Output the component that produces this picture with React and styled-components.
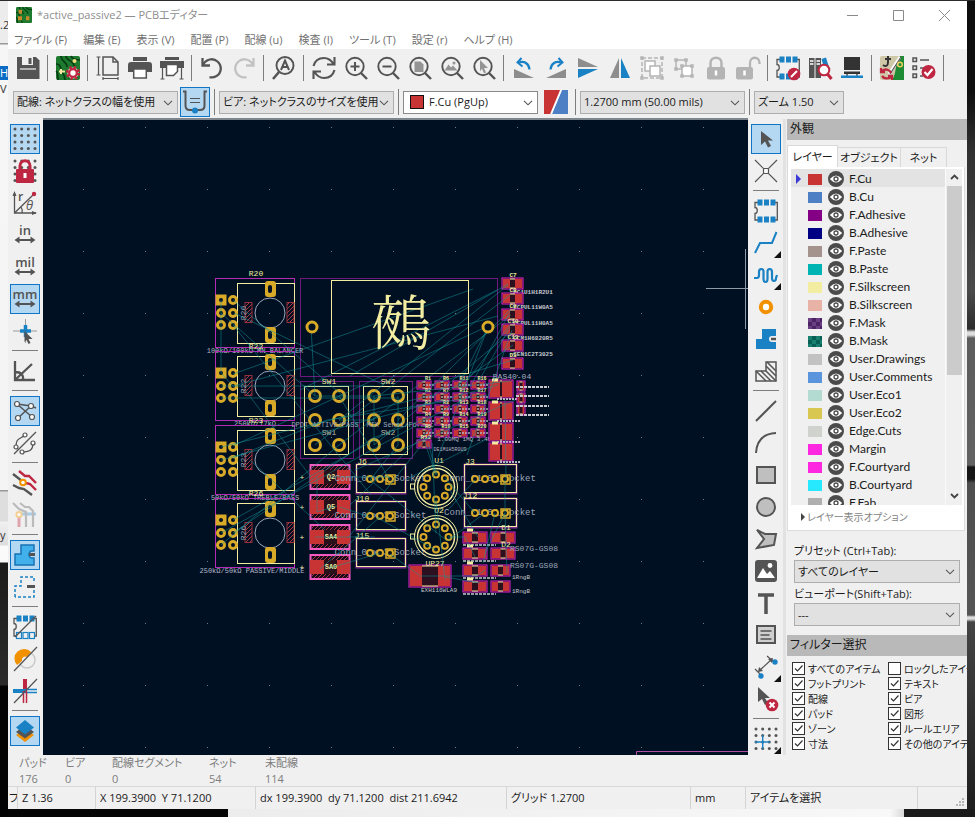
import React from "react";
import styled, { createGlobalStyle } from "styled-components";

const INK = "#545454";
const BLUE = "#1a81c4";
const RED = "#bf2641";
const ORANGE = "#f29100";
const PALE = "#b4b4b4";

const GlobalStyle = createGlobalStyle`
  *, *::before, *::after { box-sizing: border-box; }
  body {
    margin: 0;
    background: #080808;
  }
  body, button, select, input {
    font-family: "Open Sans", "Noto Sans CJK JP", sans-serif;
    font-feature-settings: "palt";
    font-size: 11px;
    line-height: 16px;
    color: #1b1b1b;
  }
`;

/* ---------- desktop and window frame ---------- */

const Desktop = styled.div`
  min-height: 100vh;
  display: grid;
  grid-template-columns: 8px minmax(0, 1fr) 8px;
  grid-template-rows: 1fr 8px;
  padding-top: 1px;
  background: #2b2b2b;
  overflow: hidden;
`;

const LeftSliver = styled.div`
  grid-row: 1 / 3;
  overflow: hidden;
  display: flex;
  flex-direction: column;
  background: linear-gradient(
    #ececec 42px, #999 42px, #999 43px, #f6f6f6 44px, #f4f4f4 489px,
    #999 489px, #999 490px, #dedede 491px, #dedede 520px, #f0f0f0 521px,
    #ddd 544px, #fafafa 545px, #fafafa 561px, #1b1b1b 562px, #2b2b2b 684px,
    #030303 685px
  );
`;

const SliverText = styled.span`
  height: 14px;
  margin-top: ${(p) => p.$gap}px;
  line-height: 14px;
  color: ${(p) => (p.$on ? "#fff" : "#333")};
  background: ${(p) => (p.$on ? "#0a6cc4" : "transparent")};
`;

const RightSliver = styled.div`
  background: linear-gradient(
    #0e0e0e 90px, #303030 150px, #4a4a4a 290px, #2c2c2c 328px, #ddd 331px,
    #ddd 334px, #5c5c5c 337px, #626262 464px, #151515 466px, #151515 478px,
    #4e4e4e 482px, #555 614px, #ddd 616px, #ddd 618px, #444 621px, #202020 800px
  );
`;

const BottomSliver = styled.div`
  grid-column: 2 / 4;
  background: linear-gradient(
    90deg,
    #050505 220px, #ececec 220px, #f8f8f8 882px, #dadada 896px, #1b1b1b 896px
  );
`;

const Window = styled.main`
  min-width: 0;
  display: flex;
  flex-direction: column;
  background: #f0f0f0;
`;

const TitleBar = styled.header`
  display: flex;
  align-items: center;
  height: 28px;
  padding-left: 8px;
  background: #fff;
  color: #8e8e8e;
`;

const Title = styled.h1`
  flex: 1;
  margin: 0 0 0 5px;
  font-size: 11px;
  line-height: 18px;
  font-weight: 400;
`;

const CaptionButton = styled.button`
  width: 46px;
  height: 28px;
  display: grid;
  place-items: center;
  padding: 0;
  border: 0;
  background: none;
`;

const MenuBar = styled.nav`
  display: flex;
  gap: 16px;
  height: 20px;
  padding-left: 6px;
  background: #fff;
`;

const MenuItem = styled.button`
  padding: 0;
  border: 0;
  background: none;
  line-height: 22px;
  white-space: nowrap;
  color: #707070;
`;

/* ---------- toolbars ---------- */

const Toolbar = styled.div`
  display: flex;
  align-items: center;
  height: 37px;
  padding-left: 4px;
`;

const OptionBar = styled.div`
  display: flex;
  align-items: center;
  height: 32px;
  padding-left: 5px;
`;

const SideBar = styled.div`
  display: flex;
  flex-direction: column;
  align-items: flex-start;
  width: 35px;
  flex: none;
  padding-top: 5px;
  padding-left: ${(p) => p.$inset}px;
`;

const ToolButton = styled.button`
  position: relative;
  flex: none;
  width: 30px;
  height: 30px;
  margin: 1px;
  display: grid;
  place-items: center;
  padding: 0;
  border: 1px solid ${(p) => (p.$on ? "#0f75c6" : "transparent")};
  background: ${(p) => (p.$on ? "#b4d7f2" : "transparent")};

  svg {
    display: block;
    overflow: visible;
  }
`;

const FlyoutMark = styled.i`
  position: absolute;
  right: -1px;
  bottom: -1px;
  border-left: 7px solid transparent;
  border-bottom: 7px solid #111;
`;

const Divider = styled.span`
  flex: none;
  width: ${(p) => (p.$across ? 26 : 1)}px;
  height: ${(p) => (p.$across ? 1 : 26)}px;
  margin: ${(p) => (p.$across ? "3px 3px 4px" : "0 4px 0 3px")};
  background: #7d7d7d;
`;

const SelectBox = styled.span`
  position: relative;
  flex: none;
  display: flex;
  align-items: center;
  width: ${(p) => p.$w};
  height: 23px;
  margin-right: ${(p) => p.$gap || 0}px;
  border: 1px solid ${(p) => (p.$light ? "#8a8a8a" : "#adadad")};
  background: ${(p) => (p.$light ? "#fff" : "#e1e1e1")};

  select {
    flex: 1;
    min-width: 0;
    height: 21px;
    padding: 0 14px 0 ${(p) => (p.$light ? 5 : 3)}px;
    border: 0;
    appearance: none;
    background: transparent;
    line-height: 20px;
  }

  svg {
    position: absolute;
    right: 4px;
    top: 8px;
    pointer-events: none;
  }
`;

const ColorChip = styled.i`
  flex: none;
  width: 14px;
  height: 14px;
  margin-left: 6px;
  border: 1px solid #111;
  background: #c83434;
`;

const Body = styled.div`
  flex: 1;
  display: flex;
`;

const Board = styled.section`
  flex: 1;
  min-width: 0;
  display: flex;
  border-top: 2px solid #7e858c;
  background: #001023;

  svg {
    display: block;
    width: 100%;
    height: 100%;
  }
`;

/* ---------- appearance panel ---------- */

const Side = styled.aside`
  flex: none;
  display: flex;
  flex-direction: column;
  width: 184px;
  margin-top: 1px;
  padding-left: 4px;
  box-shadow: inset 3px 0 #e2e2e2;
  overflow: hidden;
`;

const PanelTitle = styled.h2`
  flex: none;
  margin: 0;
  height: 21px;
  padding-left: 3px;
  font-size: 12px;
  font-weight: 400;
  line-height: 20px;
  background: #b9b9b9;
`;

const Tabs = styled.div`
  display: flex;
  align-items: flex-end;
  height: 27px;
  flex: none;
`;

const Tab = styled.button`
  height: ${(p) => (p.$on ? 22 : 20)}px;
  width: ${(p) => p.$w}px;
  padding: 0;
  border: 1px solid #d9d9d9;
  border-bottom: 0;
  border-left-width: ${(p) => (p.$on ? 1 : 0)}px;
  background: ${(p) => (p.$on ? "#fff" : "#f0f0f0")};
  white-space: nowrap;
`;

const TabPage = styled.div`
  flex: none;
  display: flex;
  flex-direction: column;
  height: 364px;
  margin-right: 2px;
  padding: 2px 2px 0 3px;
  border: 1px solid #dcdcdc;
  border-top: 0;
  background: #fff;
`;

const ListFrame = styled.div`
  display: flex;
  height: 336px;
  overflow: hidden;
  background: #f0f0f0;
`;

const LayerList = styled.ul`
  flex: 1;
  margin: 0;
  padding: 0;
  list-style: none;
`;

const LayerRow = styled.li`
  display: grid;
  grid-template-columns: 17px 20px 21px 1fr;
  align-items: center;
  height: 18px;
  padding-top: 2px;
  font-family: Lato, "Open Sans", sans-serif;
  font-size: 12px;
  background: ${(p) => (p.$on ? "#e3e3e3" : "transparent")};
`;

const RowMark = styled.i`
  margin-left: 5px;
  width: 0;
  border: 5px solid transparent;
  border-left-color: #3a3ad8;
  border-right: 0;
`;

const Swatch = styled.i`
  width: 14px;
  height: 11px;
  background: ${(p) =>
    p.$mask
      ? `repeating-conic-gradient(${p.$mask} 0 25%, ${p.$color} 0 50%) 0 0 / 8px 8px`
      : p.$color};
`;

const EyeButton = styled.button`
  padding: 0;
  border: 0;
  background: none;
  display: flex;
`;

const ScrollTrack = styled.div`
  width: 17px;
  display: flex;
  flex-direction: column;
  align-items: center;
  border-left: 1px solid #fafafa;

  svg {
    margin: 5px 0 6px;
  }
`;

const ScrollThumb = styled.div`
  width: 15px;
  height: 189px;
  margin-bottom: auto;
  background: #cbcbcb;
`;

const OptionsToggle = styled.button`
  display: flex;
  align-items: center;
  gap: 2px;
  padding: 4px 0 0 10px;
  border: 0;
  background: none;
  font-size: 10px;
  color: #848484;
`;

const Field = styled.div`
  display: flex;
  flex-direction: column;
  gap: 1px;
  padding: 0 7px;
  margin-top: ${(p) => p.$gap}px;
  line-height: 17px;
`;

const FilterPanel = styled.section`
  margin-top: 9px;
`;

const Filters = styled.div`
  display: grid;
  grid-template-columns: 96px 96px;
  padding: 5px 0 4px 5px;
`;

const FilterItem = styled.label`
  display: flex;
  align-items: center;
  gap: 3px;
  height: 15px;
  font-size: 10px;
  white-space: nowrap;

  input {
    appearance: none;
    flex: none;
    width: 13px;
    height: 13px;
    margin: 0;
    border: 1px solid #333;
    background: #fff;
  }

  input:checked {
    background: #fff
      url("data:image/svg+xml,%3Csvg xmlns='http://www.w3.org/2000/svg' viewBox='0 0 11 11'%3E%3Cpath d='M2 5.5l2.5 2.5L9.5 2.5' fill='none' stroke='%23333' stroke-width='1.2'/%3E%3C/svg%3E");
  }
`;

/* ---------- bottom panels ---------- */

const Messages = styled.div`
  display: flex;
  height: 32px;
  padding-left: 11px;
  border-bottom: 1px solid #d9d9d9;
  color: #7d7d7d;
`;

const Message = styled.dl`
  flex: none;
  width: ${(p) => p.$w}px;
  margin: 0;

  dd {
    margin: 0;
  }
`;

const StatusBar = styled.footer`
  display: flex;
  align-items: stretch;
  height: 22px;
`;

const StatusCell = styled.span`
  width: ${(p) => p.$w}px;
  flex: ${(p) => (p.$grow ? "1" : "none")};
  min-width: 0;
  padding-left: ${(p) => (p.$w < 20 ? 1 : 4)}px;
  border-right: 1px solid #d4d4d4;
  overflow: hidden;
  white-space: pre;
  line-height: 22px;
`;

const Grip = styled.span`
  width: 49px;
  display: flex;
  justify-content: flex-end;
  align-items: flex-end;
  padding: 0 2px 2px 0;
`;

/* ---------- icons ---------- */

const Svg = ({ size = 24, children }) => (
  <svg width={size} height={size} viewBox="0 0 24 24" fill="none" stroke={INK} strokeWidth="1.5" aria-hidden="true">
    {children}
  </svg>
);

const Chevron = () => (
  <svg width="10" height="6" viewBox="0 0 10 6" fill="none" stroke="#555" strokeWidth="1.1">
    <path d="M1 .8l4 4 4-4" />
  </svg>
);

const Lens = ({ children }) => (
  <>
    <circle cx="11" cy="10.5" r="8.7" strokeWidth="1.9" />
    <path d="M17 17l6 6" strokeWidth="2.4" />
    {children}
  </>
);

const Pins = ({ y, hollow }) =>
  [3.5, 10, 16.5].map((x) => (
    <rect key={x} x={x} y={y} width="5" height="6" fill={hollow ? "#f0f0f0" : BLUE} stroke={BLUE} strokeWidth={hollow ? 1.2 : 0} />
  ));

const Chip = ({ hollow }) => (
  <>
    <path d="M4 3.5H1v5c3 0 3 6 0 6V21h3M21 3.5h2.3V21H21" strokeWidth="1.3" />
    <Pins y={0.5} />
    <Pins y={17.5} hollow={hollow} />
  </>
);

const BoardArt = () => (
  <>
    <rect width="24" height="24" rx="2" fill="#1d7a2e" stroke="none" />
    <path d="M5 0c0 6 6 5 6 11M10 0c0 5 8 4 8 10M0 8c4 0 5 3 5 6s4 3 4 10M0 15c2 1 2 5 2 9M15 0c1 3 4 4 9 4" stroke="#063d13" strokeWidth="1.7" />
  </>
);

const Gear = ({ cx, cy }) => (
  <>
    <circle cx={cx} cy={cy} r="5.6" stroke={RED} strokeWidth="3" strokeDasharray="2.4 2" fill="#f3e9eb" />
    <circle cx={cx} cy={cy} r="3.8" stroke={RED} strokeWidth="2.2" fill="#fff" />
  </>
);

const Badge = ({ d }) => (
  <>
    <circle cx="18" cy="18" r="6.3" fill={RED} stroke="none" />
    <path d={d} stroke="#fff" strokeWidth="2" />
  </>
);

const Unit = ({ label }) => (
  <>
    <text x="12" y="11.5" textAnchor="middle" fontSize="13" fontWeight="600" fill={INK} stroke="none" fontFamily="Open Sans">
      {label}
    </text>
    <path d="M4 17h16" strokeWidth="2" />
    <path d="M1.500 17l5-3.500v7zM22.500 17l-5-3.500v7z" fill={INK} stroke="none" />
  </>
);

const Dots = () =>
  [2, 8.7, 15.3, 22].flatMap((x) =>
    [2, 8.5, 15, 21.5].map((y) => <circle key={`${x} ${y}`} cx={x} cy={y} r="1.5" fill={INK} stroke="none" />)
  );

const Ring = ({ x, y, r = 2 }) => <circle cx={x} cy={y} r={r} fill="#fff" strokeWidth="1.2" />;

const ICONS = {
  save: (
    <>
      <path d="M1 1h19l3.500 3.500V23H1z" fill={INK} stroke="none" />
      <path d="M6 1h11v8H6z" fill="#f0f0f0" stroke="none" />
      <path d="M12.500 2h3v6h-3z" fill={INK} stroke="none" />
      <path d="M4 13h16" stroke="#f0f0f0" strokeWidth="1.200" />
    </>
  ),
  boardSetup: (
    <>
      <BoardArt />
      <path d="M3 15.500h6M5 13v5" stroke="#f8e7a0" strokeWidth="2" />
      <circle cx="18.500" cy="5" r="2" fill="#f5dc7c" stroke="none" />
      <Gear cx={17} cy={17} />
    </>
  ),
  page: (
    <>
      <path d="M7 1h10l5 5v13H7z" />
      <path d="M17 1v5h5" />
      <path d="M2.500 1v18M.5 1h4M.5 19h4M7 22.500h15M7 21v3M22 21v3" strokeWidth="1.2" />
    </>
  ),
  print: (
    <>
      <path d="M5 1h14v4H5zM3 6h18q3 0 3 3v7h-5v-3H5v3H0V9q0-3 3-3z" fill={INK} stroke="none" />
      <path d="M5.700 13h12.600v9H5.700z" fill="#fff" />
    </>
  ),
  plot: (
    <>
      <path d="M5 1h14v3H5zM0 5h24v7H0z" fill={INK} stroke="none" />
      <path d="M6.500 8.500h11v7l-4 4h-7z" fill="#fff" />
      <path d="M2.500 11v12M.5 23h4M21.500 11v12M19.500 23h4" strokeWidth="1.2" />
    </>
  ),
  undo: <path d="M2.500 2v7.500H10M3 9C6 3 13 1.500 17.500 5.500s4.500 11-1 14.500c-2 1.200-4.500 1.700-7 1.200" strokeWidth="2.3" />,
  redo: <path d="M21.500 2v7.500H14M21 9C18 3 11 1.500 6.500 5.500s-4.500 11 1 14.500c2 1.200 4.500 1.700 7 1.200" strokeWidth="2.3" stroke="#c2c2c2" />,
  find: (
    <>
      <circle cx="13" cy="9.500" r="8.500" strokeWidth="1.900" />
      <path d="M7 16l-6 7" strokeWidth="2.600" />
      <path d="M9 14l4-9.500L17 14M10.500 11h5" strokeWidth="2" />
    </>
  ),
  refresh: <path d="M1.500 10C3 4.500 7 2 12 2c4 0 7 2 9.500 6M22.500 1v7.500H15M22.500 14c-1.500 5.500-5.500 8-10.500 8-4 0-7-2-9.500-6M1.500 23v-7.500H9" strokeWidth="2.100" />,
  zoomIn: <Lens><path d="M11 6v9M6.500 10.500h9" strokeWidth="2" /></Lens>,
  zoomOut: <Lens><path d="M6.500 10.500h9" strokeWidth="2" /></Lens>,
  zoomPage: <Lens><path d="M6.500 5.500h6l3 3V16h-9z" fill="#949494" stroke="none" /></Lens>,
  zoomObjects: <Lens><path d="M4.500 14.500l4-6 2.500 3 2-2 4.500 5z" fill="#949494" stroke="none" /><circle cx="14" cy="7" r="1.500" fill="#949494" stroke="none" /></Lens>,
  zoomSelection: <Lens><path d="M8 4l8 8h-4l2 4.500-2 .8-2-4.500-2 2.500z" fill="#949494" stroke="none" /></Lens>,
  rotateLeft: (
    <>
      <path d="M2 13v9h20z" fill="#8d8d8d" stroke="none" />
      <path d="M7 6.500c5-2 10 1 10.500 7" stroke={BLUE} strokeWidth="2.200" />
      <path d="M9.500 2L5.500 6.500l5 4" stroke={BLUE} strokeWidth="2" />
    </>
  ),
  rotateRight: (
    <>
      <path d="M22 13v9H2z" fill="#8d8d8d" stroke="none" />
      <path d="M17 6.500c-5-2-10 1-10.500 7" stroke={BLUE} strokeWidth="2.200" />
      <path d="M14.500 2l4 4.500-5 4" stroke={BLUE} strokeWidth="2" />
    </>
  ),
  flipV: (
    <>
      <path d="M2 2v9h20z" fill="#8d8d8d" stroke="none" />
      <path d="M2 22v-9h20z" fill={BLUE} stroke="none" />
    </>
  ),
  flipH: (
    <>
      <path d="M2 22h9V2z" fill="#8d8d8d" stroke="none" />
      <path d="M22 22h-9V2z" fill={BLUE} stroke="none" />
    </>
  ),
  group: (
    <g stroke={PALE}>
      <path d="M2 2h20v20H2z" strokeDasharray="4 2" />
      <path d="M5 5h10v10H5z" fill="#fff" />
      <path d="M10 10h10v10H10z" fill="#fff" />
      <path d="M1 1h2v2H1zM21 1h2v2h-2zM1 21h2v2H1zM21 21h2v2h-2z" />
    </g>
  ),
  ungroup: (
    <g stroke={PALE}>
      <path d="M4 4h10v9H4z" />
      <path d="M10 10h10v10H10z" fill="#fff" />
      <path d="M3 3h2v2H3zM13 3h2v2h-2zM3 12h2v2H3zM9 9h2v2H9zM19 9h2v2h-2zM9 19h2v2H9zM19 19h2v2h-2z" />
    </g>
  ),
  lock: (
    <>
      <path d="M6.500 12V7c0-7 11-7 11 0v5" stroke={PALE} strokeWidth="2.500" />
      <rect x="3" y="11" width="18" height="12.500" rx="2" fill={PALE} stroke="none" />
      <path d="M12 14.500v5" stroke="#fff" strokeWidth="2.500" />
    </>
  ),
  unlock: (
    <>
      <path d="M14 12V7c0-7 9.500-7 9.500 0v1" stroke={PALE} strokeWidth="2.300" />
      <rect x="0" y="11" width="17" height="12.500" rx="2" fill={PALE} stroke="none" />
      <path d="M8.500 14.500v5" stroke="#fff" strokeWidth="2.500" />
    </>
  ),
  footprintEdit: <><Chip /><Badge d="M15 21l6-6" /></>,
  library: (
    <>
      <path d="M1 2h5.500v20H1zM7.500 2H13v20H7.500z" fill={INK} stroke="none" />
      <path d="M2 5h3.500M2 8h3.500M8.500 5H12M8.500 8H12" stroke="#fff" />
      <path d="M13.500 3l4.500-1.500 4 13-5 1z" fill={BLUE} stroke="none" />
      <circle cx="16" cy="14" r="5.300" fill="#fff" stroke={RED} strokeWidth="2" />
      <path d="M19.500 18l4 5" stroke={RED} strokeWidth="3" />
    </>
  ),
  update: (
    <>
      <path d="M4 1h16v13H4z" fill="#333" stroke="none" />
      <path d="M4 15.500h16V18H4z" fill="#333" stroke="none" />
      <path d="M7 18v2M17 18v2" />
      <path d="M1 19.500h22V22H1z" fill={BLUE} stroke="none" />
    </>
  ),
  pcb: (
    <>
      <rect width="24" height="24" rx="2" fill="#cfc8a8" stroke="none" />
      <path d="M24 0v24H12C17 17 14 11 20 0z" fill="#1d8a34" stroke="none" />
      <path d="M8 0v6M5 3h6M8 6c0 4-2 5-5 3" stroke="#333" strokeWidth="2" />
      <path d="M20 1L9 18" stroke="#fff" strokeWidth="3" />
      <path d="M21 1L10 18" strokeWidth="1.200" />
      <circle cx="20" cy="8.500" r="2.300" stroke="#f0d060" />
      <path d="M2 15c4-3 8-1 9 2M11 21c-3 2-7 2-9-1M1 12v4h4M12 24v-4H8" stroke={RED} strokeWidth="2.300" />
    </>
  ),
  drc: (
    <>
      <path d="M1 2h3.500v3.500H1zM1 10h3.500v3.500H1zM1 18h3.500v3.500H1zM8 4h9M8 12h4M8 20h3" />
      <circle cx="16.500" cy="16" r="7" fill={RED} stroke="none" />
      <path d="M12.500 16l3 3 5-6" stroke="#fff" strokeWidth="2.200" />
    </>
  ),
  trackWidth: (
    <>
      <path d="M0 1.500h2.500v14q0 4.500 4.500 4.500h10q4.500 0 4.500-4.500v-14H24" strokeWidth="2" />
      <path d="M7 8.500h10M7 12.500h10" strokeWidth="1.200" />
      <circle cx="12" cy="20.500" r="3" fill={BLUE} stroke="none" />
    </>
  ),
  layerPair: (
    <>
      <path d="M0 0h17L7 24H0z" fill="#c83434" stroke="none" />
      <path d="M18 0h6v24H8z" fill="#4d7fc4" stroke="none" />
      <path d="M17 0L7 24" stroke="#fff" strokeWidth="1.800" />
    </>
  ),
  grid: <Dots />,
  gridLock: (
    <>
      <Dots />
      <path d="M7 11V7c0-7 10-7 10 0v4" stroke={RED} strokeWidth="3" />
      <rect x="3" y="10" width="18" height="14" rx="1" fill={RED} stroke="none" />
      <path d="M12 14v5" stroke="#fff" strokeWidth="3" />
    </>
  ),
  polar: (
    <>
      <path d="M1.500 2v20H23M1.500 22L20 4M8 16q2 3 1 6" strokeWidth="1.300" />
      <path d="M1.500 0L-.5 5h4zM24 22l-5-2v4z" fill={INK} stroke="none" />
      <circle cx="21" cy="3" r="2.200" fill={RED} stroke="none" />
      <text x="5" y="10" fontSize="12" fontWeight="600" fill={INK} stroke="none">r</text>
      <text x="13" y="19" fontSize="13" fontStyle="italic" fill={INK} stroke="none">θ</text>
    </>
  ),
  inch: <Unit label="in" />,
  mil: <Unit label="mil" />,
  mm: <Unit label="mm" />,
  cursor: (
    <>
      <path d="M12.500 0v24M0 12h24" stroke="#9a9a9a" strokeWidth="1" />
      <path d="M12.500 6v12M7 12h11" stroke={BLUE} strokeWidth="3.500" />
      <path d="M11.500 12l8 8h-4l2 4-2 1-2-4-2 2z" fill={INK} stroke="none" />
    </>
  ),
  angle: <path d="M2 2v19h20M2 21L19 5M2 13q9 0 8 8" strokeWidth="2.300" />,
  ratsnest: (
    <>
      <path d="M4 5l15 13M4 5l14 2 5 2M18 7L5 19" />
      <Ring x={4} y={5} r={2.500} /><Ring x={18} y={7} r={2.500} /><Ring x={5} y={19} r={2.500} /><Ring x={19} y={18} r={2.500} />
    </>
  ),
  curved: (
    <>
      <path d="M3 16c0-9 3-7 9-12M9 21c9 0 11-3 11-9M1 23L23 1" strokeWidth="1.300" />
      <Ring x={12} y={4} /><Ring x={3} y={16} /><Ring x={20} y={12} /><Ring x={9} y={21} />
    </>
  ),
  tracks: (
    <>
      <path d="M6 0l6 5h4l7 7" stroke={RED} strokeWidth="2.400" />
      <path d="M13 12l4 1 6 6" stroke={RED} strokeWidth="2.400" />
      <path d="M0 3l9 7M0 14l6 3 5 1 8 6" strokeWidth="2.400" />
      <circle cx="10" cy="11.500" r="2.800" stroke={ORANGE} strokeWidth="2" fill="#fff" />
    </>
  ),
  dimmed: (
    <>
      <path d="M6 12v12" stroke="#e0a4ae" strokeWidth="3" />
      <path d="M8 11h15" stroke="#a9cbe4" strokeWidth="3" />
      <path d="M0 0l6 6 7 3v15M7 0l5 4h4l4 4v16" stroke="#bbb" strokeWidth="2.200" />
      <circle cx="6" cy="11.500" r="2.600" fill="#fff" stroke="#f4cf94" strokeWidth="2" />
    </>
  ),
  zoneFill: (
    <>
      <path d="M2 22V11h6V2h13v6h-3a4 4 0 000 7h3v7z" fill="#42b0ea" stroke="#1673b5" />
      <path d="M16 11.500h6" strokeWidth="3" />
    </>
  ),
  zoneOutline: (
    <>
      <path d="M2 22V11h6V2h13v6M21 15v7H2" stroke={BLUE} strokeDasharray="3 2" />
      <path d="M14 11.500h8" strokeWidth="3" />
    </>
  ),
  padOutline: <><Chip hollow /><path d="M2 22L23 1" strokeWidth="1.200" /></>,
  viaOutline: (
    <>
      <circle cx="14" cy="13" r="8" stroke="#c8c8c8" />
      <path d="M4 18a9 9 0 0114-13l-4 5a3.500 3.500 0 00-5 4z" fill={ORANGE} stroke="none" />
      <path d="M1 24L24 0" strokeWidth="1.200" />
    </>
  ),
  trackOutline: (
    <>
      <path d="M12 0v12" stroke={RED} strokeWidth="4" />
      <path d="M0 12h12" stroke={BLUE} strokeWidth="4" />
      <path d="M12 10.500h12M12 13.500h12" stroke={BLUE} />
      <path d="M10.500 12v12M13.500 12v12" stroke={RED} />
      <path d="M1 24L24 0" strokeWidth="1.200" />
    </>
  ),
  layers: (
    <>
      <path d="M12 10l9 6-9 7-9-7z" fill={ORANGE} stroke="none" />
      <path d="M12 6l9 7-9 6.500L3 13z" fill={INK} stroke="none" />
      <path d="M12 1l9 7.500-9 7-9-7z" fill={BLUE} stroke="none" />
    </>
  ),
  select: <path d="M7 4v14l4-3.500 3 6 3-1.500-3-5.500h5z" fill={INK} stroke="none" />,
  localNet: (
    <>
      <path d="M1 1l22 22M23 1L1 23" strokeWidth="1.200" />
      <rect x="9.500" y="9.500" width="5" height="5" rx="1" fill="#fff" strokeWidth="1.200" />
    </>
  ),
  footprint: <Chip />,
  route: <path d="M1 22l5-10h12l4.500-11" stroke={BLUE} strokeWidth="2" />,
  tune: <path d="M0 15h3q2 0 2-3V9q0-3 2.300-3T9.500 9v7q0 3 2 3t2-3V9q0-3 2.200-3T18 9v6q0 3 2 3t2-3l1-3" stroke={BLUE} strokeWidth="2.200" />,
  via: <circle cx="12" cy="12" r="5.200" fill="#fff" stroke={ORANGE} strokeWidth="4" />,
  zone: (
    <>
      <path d="M2 22V12h6V2h14v7h-4a3 3 0 000 6h4v7z" fill={BLUE} stroke="none" />
      <path d="M17 12h5" strokeWidth="2.500" />
    </>
  ),
  hatch: (
    <>
      <path d="M2 22V12h10V3h10v19z" />
      <path d="M2 12l10 10M7 12l10 10M12 12l10 10M12 7l10 10M13 3l9 9" />
    </>
  ),
  line: <path d="M2 22L22 2" strokeWidth="2" />,
  arc: <path d="M2 22Q3 3 22 2" strokeWidth="2" />,
  rect: <path d="M3 4h18v16H3z" fill="#bfbfbf" strokeWidth="2" />,
  circle: <circle cx="12" cy="12" r="9" fill="#bfbfbf" strokeWidth="2" />,
  polygon: <path d="M3 3l8 4h11l-2 11-17 3 7-9z" fill="#bfbfbf" strokeWidth="2" />,
  image: (
    <>
      <rect x="1" y="1" width="22" height="22" rx="3" fill={INK} stroke="none" />
      <path d="M3 19l6-10 4 6 3-3 5 7z" fill="#fff" stroke="none" />
      <circle cx="16" cy="6.500" r="2.400" fill="#fff" stroke="none" />
    </>
  ),
  text: <path d="M4 4h16M12 4v19" strokeWidth="3.500" />,
  textBox: (
    <>
      <path d="M3 3h18v17H3z" fill="#cfcfcf" strokeWidth="2" />
      <path d="M6.500 8h11M6.500 12h9M6.500 16h11" />
    </>
  ),
  dimension: (
    <>
      <path d="M1 14l7 7M13 1l8 7M5 16L18 4" strokeWidth="1.200" />
      <path d="M4 17l1-5 4 4zM19 3l-1 5-4-4z" fill={INK} stroke="none" />
      <circle cx="7" cy="21" r="2.700" fill={BLUE} stroke="none" />
      <circle cx="21" cy="7" r="2.700" fill={BLUE} stroke="none" />
    </>
  ),
  remove: <><path d="M4 0v15l4-3 3 6 3-2-3-5h5z" fill={INK} stroke="none" /><Badge d="M15.500 15.500l5 5M20.500 15.500l-5 5" /></>,
  gridOrigin: (
    <>
      <Dots />
      <path d="M8.700 8v14M1 15h15" stroke={BLUE} strokeWidth="1.400" />
    </>
  ),
};

const Eye = () => (
  <svg width="16" height="16" viewBox="0 0 16 16" aria-hidden="true">
    <circle cx="8" cy="8" r="8" fill="#4b4b4b" />
    <path d="M1.800 8q6.200-7 12.400 0-6.200 7-12.400 0z" fill="#fff" />
    <circle cx="8" cy="8" r="2" fill="#fff" stroke="#4b4b4b" strokeWidth="1.300" />
  </svg>
);

const FLYOUT = ["route", "tune", "dimension", "gridOrigin"];

// "|" stands for a divider, a leading "*" for a pressed button
function Tools({ items, across }) {
  return items.split(" ").map((item, i) => {
    if (item === "|") return <Divider key={i} $across={across} />;
    const on = item[0] === "*";
    const name = on ? item.slice(1) : item;
    return (
      <ToolButton key={i} $on={on} aria-label={name} aria-pressed={on}>
        <Svg>{ICONS[name]}</Svg>
        {FLYOUT.includes(name) && <FlyoutMark />}
      </ToolButton>
    );
  });
}

function Combo({ label, value, children, ...box }) {
  return (
    <SelectBox {...box}>
      {children}
      <select aria-label={label}>
        <option>{value}</option>
      </select>
      <Chevron />
    </SelectBox>
  );
}

/* ---------- board drawing ---------- */

const SILK = "#f2eda1";
const FAB = "#9ea5b8";
const COPPER = "#c83434";
const COURT = "#ff26e2";
const GOLD = "#d9aa28";

const Silk = ({ x, y, size = 8, fill = SILK, children, ...rest }) => (
  <text x={x} y={y} fontSize={size} fill={fill} textAnchor="middle" dominantBaseline="central" fontFamily="Liberation Mono, monospace" {...rest}>
    {children}
  </text>
);

const Hole = ({ x, y, r = 4, w = 3 }) => <circle cx={x} cy={y} r={r} fill="#001023" stroke={GOLD} strokeWidth={w} />;

function Pot({ y, name, part, labelX = 255 }) {
  return (
    <g transform={`translate(0 ${y})`}>
      <rect x="215.500" y="278.500" width="79" height="69" fill="none" stroke="#b32bb5" />
      <rect x="237.500" y="283.500" width="57" height="60" fill="none" stroke={SILK} />
      <circle cx="270" cy="313" r="15" fill="none" stroke={FAB} />
      {[245, 287].map((x) => (
        <rect key={x} x={x} y="302.500" width="7" height="20" fill="url(#hatch)" stroke="#96303b" />
      ))}
      {[289, 335].map((cy) => (
        <g key={cy}>
          <rect x="265" y={cy - 8} width="11" height="16" rx="3" fill={GOLD} />
          <rect x="268" y={cy - 4} width="4" height="8" rx="2" fill="#001023" />
        </g>
      ))}
      <rect x="215.500" y="294.500" width="11" height="11" fill={GOLD} />
      {[300, 313, 325].map((cy) => (
        <React.Fragment key={cy}>
          <Hole x={221} y={cy} r={3.5} />
          <Hole x={233} y={cy} r={3.5} />
        </React.Fragment>
      ))}
      <Silk x={256} y={273} size={8}>{name}</Silk>
      <Silk x={0} y={0} size={8} fill={FAB} transform="translate(243 313) rotate(-90)">{name}</Silk>
      <Silk x={labelX} y={351} size={7} fill="#b4b8c8">{part}</Silk>
    </g>
  );
}

function Switch({ x, name }) {
  return (
    <g transform={`translate(${x} 0)`}>
      <rect x="300.500" y="381.500" width="53" height="77" fill="none" stroke="#6d187d" />
      <rect x="304.500" y="386.500" width="44" height="68" fill="none" stroke={SILK} />
      {[396, 420, 445].flatMap((y) => [315, 339].map((cx) => <Hole key={cx + y} x={cx} y={y} r={5.500} w={3} />))}
      <Silk x={329} y={381}>{name}</Silk>
      <Silk x={329} y={432} fill="#b9b9a5">{name}</Silk>
    </g>
  );
}

function Cap({ y, name }) {
  return (
    <g>
      <rect x="310.500" y={y} width="39" height="24" fill="#180c1d" stroke="#f25bc0" strokeWidth="2" />
      <rect x="312" y={y + 1} width="36" height="22" fill="url(#hatch)" />
      <rect x="310" y={y + 5} width="40" height="14" fill={COPPER} />
      <rect x="324" y={y + 5} width="13" height="14" fill="#2a101a" />
      <Silk x={331} y={y + 12} size={7} fontWeight="bold">{name}</Silk>
      <Silk x={302} y={y + 12} size={8}>+</Silk>
    </g>
  );
}

function Conn({ x, y, w, pads, name, part }) {
  return (
    <g>
      <rect x={x + 0.5} y={y + 0.5} width={w} height="29" fill="none" stroke="#7e2c91" strokeWidth="2" />
      <rect x={x + 0.5} y={y + 0.5} width={w} height="28" fill="none" stroke={SILK} />
      <Silk x={x + w / 2} y={y + 15} size={9} fill={FAB}>{part}</Silk>
      {pads.map((p) => <Hole key={p} x={p} y={y + 15} r={3} w={2} />)}
      <rect x={pads[pads.length - 1] - 4} y={y + 11} width="9" height="9" fill="none" stroke={GOLD} strokeWidth="1.500" />
      <Silk x={x + 6} y={y - 3} size={8}>{name}</Silk>
    </g>
  );
}

function Tube({ y, name }) {
  return (
    <g>
      <circle cx="436" cy={y} r="21.500" fill="none" stroke={SILK} />
      <circle cx="436" cy={y} r="18.500" fill="none" stroke={SILK} strokeWidth="1.500" />
      <rect x="410.500" y={y - 3} width="4" height="5" fill="none" stroke={SILK} />
      {[0, 1, 2, 3, 4, 5, 6, 7].map((i) => (
        <Hole key={i} x={436 + 12.500 * Math.cos((i * Math.PI) / 4)} y={y + 12.500 * Math.sin((i * Math.PI) / 4)} r={3} w={2} />
      ))}
      <Silk x={439} y={y - 27}>{name}</Silk>
    </g>
  );
}

function Smd({ x, y, w, h, cut = 5 }) {
  const mid = (w - cut) / 2;
  return (
    <g>
      <rect x={x} y={y} width={w} height={h} fill="#32101f" stroke={COURT} strokeWidth="1" opacity=".9" />
      <rect x={x + 1} y={y + 1} width={mid - 1} height={h - 2} fill={COPPER} />
      <rect x={x + mid + cut} y={y + 1} width={mid - 1} height={h - 2} fill={COPPER} />
      <path d={`M${x + mid} ${y + 1}h${cut}M${x + mid} ${y + h - 1}h${cut}`} stroke={SILK} />
    </g>
  );
}

const RATS = [
  "M221 300v73L233 386M221 313l94 83M233 300l110 96M233 325l138 170M221 386h153M233 374l240-85",
  "M234 313l150 72M233 386l265-70M221 398h177M233 446l255-120M221 460l277-75M221 447l216-53",
  "M233 458l94-38 160-25M233 533l140-95 60-22M221 545l118-100M233 520l150-85M221 533l254-140",
  "M339 420l169-135M315 445l195-150M339 445l172-130M374 396l137-15M398 420l112-110M374 445l136-112",
  "M311 327l4 69M398 396v49M374 396v49M488 327l-30 60M488 327l-50 130M510 312l-40 75M512 330l-45 125",
  "M315 396h59M339 420h35M339 396l51 84M398 445l-28 35M245 390l66 87M250 460l75 70M317 477v35l20-6",
  "M330 477h60M340 507l30 10M315 537h60M330 568l50-15M370 480l76 60M380 517l-60 52M390 554l29 21",
  "M425 443l11 32M428 443l9 32M432 443l4 90M436 500l9 80M448 487l30 50M445 478l30 35M436 550l-60-33",
  "M475 480l-27 30M485 513l-38 28M495 513l-12 50M505 480v33l-20 40M505 513l2 60M448 537h17l10 20",
  "M505 400l1 80M430 385l83-25M443 395l70-50M460 390l50-65M478 382l32-55M419 576h58l8-6M445 577l35 6",
  "M350 376l158-92M300 390l197-100M355 470l160-70M350 505l95-90M348 538l87-110M405 480l80-40",
];

const CAP_PARTS = ["0C1U1H1R2U1", "CCPUL11W0A5", "CCPUL11H0A5", "CCM1H6820R5", "CEN1C2T3025"];

const BoardDrawing = () => (
  <svg viewBox="43 120 705 635" preserveAspectRatio="xMinYMin slice" role="img" aria-label="PCB">
    <defs>
      <pattern id="dots" x="83" y="127" width="62" height="62" patternUnits="userSpaceOnUse">
        <rect width="1" height="1" fill="#6f7a82" />
      </pattern>
      <pattern id="hatch" width="4" height="4" patternUnits="userSpaceOnUse">
        <path d="M-1 5l6-6M-1 1l2-2M3 5l2-2" stroke="#a83340" strokeWidth="1" />
      </pattern>
    </defs>
    <rect x="43" y="120" width="705" height="635" fill="url(#dots)" />

    <rect x="300.500" y="278.500" width="197" height="98" fill="none" stroke="#6d187d" />
    <Pot y={0} name="R20" part="100kΩ/100kΩ MN BALANCER" />
    <Pot y={73} name="R22" part="250kΩ/17kΩ" />
    <Pot y={147} name="R23" part="50kΩ/50kΩ TREBLE/BASS" />
    <Pot y={220} name="R26" part="250kΩ/50kΩ PASSIVE/MIDDLE" labelX={252} />
    <Switch x={0} name="SW1" />
    <Switch x={59} name="SW2" />
    <Silk x={325} y={425} size={7} fill={FAB}>DPDT ACTIVE/PASS</Silk>
    <Silk x={400} y={425} size={7} fill={FAB}>MIX Sensi/Format</Silk>

    {[["Q2", 465], ["Q5", 495], ["SA4", 525], ["SA0", 555]].map(([name, y]) => <Cap key={name} name={name} y={y} />)}
    <Conn x={356} y={464} w={49} pads={[370, 380, 390]} name="J6" part="Conn_01x03_Socket" />
    <Conn x={356} y={501} w={49} pads={[370, 380, 390]} name="J10" part="Conn_01x03_Socket" />
    <Conn x={356} y={538} w={49} pads={[370, 380, 390]} name="J15" part="Conn_01x03_Socket" />
    <Conn x={464} y={464} w={52} pads={[475, 485, 495, 505]} name="J3" part="Conn_01x04_Socket" />
    <Conn x={464} y={498} w={52} pads={[475, 485, 495, 505]} name="J12" part="Conn_01x04_Socket" />
    <Tube y={487} name="U1" />
    <Tube y={537} name="U2" />

    {[278, 293, 309, 324, 340, 358].map((y, i) => (
      <g key={y}>
        <Smd x={502} y={y} w={21} h={11} />
        <Silk x={513} y={y - 3} size={6} fontWeight="bold">{["C7", "C8", "C9", "C10", "C13", "D3"][i]}</Silk>
        {i < 5 && <Silk x={533} y={y + 14} size={6} fill="#c8c8ce" fontWeight="bold">{CAP_PARTS[i]}</Silk>}
      </g>
    ))}
    <Silk x={512} y={376} fill="#a8adc0">BAS40-04</Silk>

    {[417, 435, 453, 471].flatMap((x, c) =>
      [381, 393, 405, 417, 429].map((y, r) => (
        <g key={x + " " + y}>
          <Smd x={x} y={y} w={14} h={8} cut={3} />
          <Silk x={x + 11} y={y - 2} size={5} fontWeight="bold">{`R${c * 5 + r + 1}`}</Silk>
          <path d={`M${x + 6} ${y + 4}h11`} stroke="#b8b8c4" strokeWidth="2" strokeDasharray="2 1" opacity=".7" />
        </g>
      ))
    )}
    <Silk x={466} y={439} size={6} fill="#b8b8c4">1.00MQ 1MQ 3.4MQ</Silk>
    <Smd x={417} y={440} w={14} h={8} cut={3} />
    <Silk x={426} y={437} size={6} fontWeight="bold">R12</Silk>
    <Silk x={450} y={450} size={5} fill="#b8b8c4">DE1M1H5R0U9</Silk>

    {[380, 402, 423, 443].map((y) => (
      <g key={y}>
        <Smd x={489} y={y} w={24} h={18} cut={2} />
        <path d={`M492 ${y}h6`} stroke={SILK} strokeWidth="3" />
        <path d={`M497 ${y + 19}h24`} stroke="#b8b8c4" strokeWidth="2" strokeDasharray="2 1" />
      </g>
    ))}
    {[381, 393, 405].map((y) => <Smd key={y} x={517} y={y} w={8} h={10} cut={3} />)}
    {[387, 396, 406, 415].map((y) => <path key={y} d={`M516 ${y}h33`} stroke="#c8c8ce" strokeWidth="2" strokeDasharray="3 1" />)}

    <Smd x={409} y={565} w={42} h={22} cut={16} />
    <Silk x={435} y={563}>UP27</Silk>
    <Silk x={439} y={590} size={6} fill="#c8c8ce">EXH116WLA9</Silk>
    {[532, 548, 565, 581].map((y, i) => (
      <g key={y}>
        <Smd x={463} y={y} w={24} h={11} cut={6} />
        <path d={`M467 ${y - 2}h6`} stroke={SILK} strokeWidth="3" />
        <path d={`M463 ${y + 13}h33`} stroke="#c8c8ce" strokeWidth="1.500" strokeDasharray="3 1" />
        <Smd x={491} y={y} w={i < 2 ? 24 : 19} h={11} cut={5} />
      </g>
    ))}
    <Silk x={506} y={527}>D1</Silk>
    <Silk x={506} y={544}>D2</Silk>
    <Silk x={534} y={548} fill={FAB}>RS07G-GS08</Silk>
    <Silk x={534} y={565} fill={FAB}>RS07G-GS08</Silk>
    <Silk x={521} y={577} size={6} fill="#c8c8ce">1RngB</Silk>
    <Silk x={521} y={591} size={6} fill="#c8c8ce">1RngB</Silk>

    {RATS.map((d) => <path key={d} d={d} fill="none" stroke="#12969a" strokeWidth="1" opacity=".5" />)}

    <rect x="331.500" y="280.500" width="137" height="93" fill="none" stroke={SILK} />
    <text x="401" y="345" textAnchor="middle" fontSize="60" fontWeight="300" fill={SILK} fontFamily="Noto Serif CJK JP, Noto Sans CJK JP, serif">鵺</text>
    <Hole x={312} y={327} r={5} />
    <Hole x={488} y={327} r={5} />

    <path d="M706 288.500h42M745.500 249v80" stroke="#8d99a5" />
    <path d="M748 751.500H636.500V755" fill="none" stroke="#b04fa5" />
  </svg>
);

/* ---------- data ---------- */

const MENUS = ["ファイル (F)", "編集 (E)", "表示 (V)", "配置 (P)", "配線 (u)", "検査 (I)", "ツール (T)", "設定 (r)", "ヘルプ (H)"];

const LAYERS = [
  ["F.Cu", "#c83434"],
  ["B.Cu", "#4d7fc4"],
  ["F.Adhesive", "#840084"],
  ["B.Adhesive", "#000084"],
  ["F.Paste", "#a4938c"],
  ["B.Paste", "#00b4b4"],
  ["F.Silkscreen", "#f2eda1"],
  ["B.Silkscreen", "#e8b2a7"],
  ["F.Mask", "#6b3f83", "#4b2264"],
  ["B.Mask", "#188070", "#086054"],
  ["User.Drawings", "#c2c2c2"],
  ["User.Comments", "#5994dc"],
  ["User.Eco1", "#b4dbd2"],
  ["User.Eco2", "#d8c852"],
  ["Edge.Cuts", "#d0d2cd"],
  ["Margin", "#ff26e2"],
  ["F.Courtyard", "#ff26e2"],
  ["B.Courtyard", "#26e9ff"],
  ["F.Fab", "#afafaf"],
];

const FILTERS = [
  "すべてのアイテム", "ロックしたアイテム", "フットプリント", "テキスト", "配線", "ビア",
  "パッド", "図形", "ゾーン", "ルールエリア", "寸法", "その他のアイテム",
];

const MESSAGES = [["パッド", "176", 46], ["ビア", "0", 47], ["配線セグメント", "0", 97], ["ネット", "54", 56], ["未配線", "114", 60]];

export default function App() {
  return (
    <>
      <GlobalStyle />
      <Desktop>
        <LeftSliver>
          <SliverText $gap={17}>.2</SliverText>
          <SliverText $gap={34} $on>H</SliverText>
          <SliverText $gap={2}>V</SliverText>
          <SliverText $gap={432}>y</SliverText>
        </LeftSliver>

        <Window>
          <TitleBar>
            <Svg size={16}>
              <BoardArt />
              <path d="M4 4h5v6H4zM3 14h6v6H3zM15 14h5v6h-5z" fill="#c98a2b" stroke="none" />
            </Svg>
            <Title>*active_passive2 — PCBエディター</Title>
            {[["minimize", "M0 5.500h11"], ["maximize", "M.5.500h10v10H.5z"], ["close", "M0 0l11 11M11 0L0 11"]].map(([name, d]) => (
              <CaptionButton key={name} aria-label={name}>
                <svg width="11" height="11" fill="none" stroke="#8a8a8a"><path d={d} /></svg>
              </CaptionButton>
            ))}
          </TitleBar>

          <MenuBar>
            {MENUS.map((m) => <MenuItem key={m}>{m}</MenuItem>)}
          </MenuBar>

          <Toolbar>
            <Tools items="save | boardSetup | page print plot | undo redo | find | refresh zoomIn zoomOut zoomPage zoomObjects zoomSelection | rotateLeft rotateRight flipV flipH group ungroup lock unlock | footprintEdit library update | pcb drc |" />
          </Toolbar>

          <OptionBar>
            <Combo label="配線" value="配線: ネットクラスの幅を使用" $w="165px" $gap={1} />
            <Tools items="*trackWidth |" />
            <Combo label="ビア" value="ビア: ネットクラスのサイズを使用" $w="175px" $gap={1} />
            <Divider />
            <Combo label="レイヤー" value="F.Cu (PgUp)" $w="135px" $gap={2} $light>
              <ColorChip />
            </Combo>
            <Tools items="layerPair |" />
            <Combo label="グリッド" value="1.2700 mm (50.00 mils)" $w="165px" $gap={1} />
            <Divider />
            <Combo label="ズーム" value="ズーム 1.50" $w="90px" />
          </OptionBar>

          <Body>
            <SideBar $inset={1}>
              <Tools across items="*grid gridLock polar inch mil *mm cursor | angle | *ratsnest curved | tracks dimmed | *zoneFill zoneOutline | padOutline viaOutline trackOutline | *layers" />
            </SideBar>
            <Board>
              <BoardDrawing />
            </Board>
            <SideBar $inset={2}>
              <Tools across items="*select localNet | footprint route tune via zone hatch | line arc rect circle polygon image text textBox dimension remove | gridOrigin" />
            </SideBar>

            <Side>
              <PanelTitle>外観</PanelTitle>
              <Tabs role="tablist">
                <Tab role="tab" $w={51} $on>レイヤー</Tab>
                <Tab role="tab" $w={63}>オブジェクト</Tab>
                <Tab role="tab" $w={46}>ネット</Tab>
              </Tabs>
              <TabPage>
                <ListFrame>
                  <LayerList>
                    {LAYERS.map(([name, color, mask], i) => (
                      <LayerRow key={name} $on={i === 0}>
                        {i === 0 ? <RowMark /> : <span />}
                        <Swatch $color={color} $mask={mask} />
                        <EyeButton aria-label={`${name} visibility`}><Eye /></EyeButton>
                        <span>{name}</span>
                      </LayerRow>
                    ))}
                  </LayerList>
                  <ScrollTrack>
                    <svg width="9" height="6" fill="none" stroke="#444" strokeWidth="1.800"><path d="M1 5l3.500-3.500L8 5" /></svg>
                    <ScrollThumb />
                    <svg width="9" height="6" fill="none" stroke="#444" strokeWidth="1.800"><path d="M1 1l3.500 3.500L8 1" /></svg>
                  </ScrollTrack>
                </ListFrame>
                <OptionsToggle>
                  <svg width="4" height="8"><path d="M0 0l4 4-4 4z" fill="#444" /></svg>
                  レイヤー表示オプション
                </OptionsToggle>
              </TabPage>
              <Field $gap={11}>
                <label htmlFor="preset">プリセット (Ctrl+Tab):</label>
                <SelectBox $w="100%">
                  <select id="preset"><option>すべてのレイヤー</option></select>
                  <Chevron />
                </SelectBox>
              </Field>
              <Field $gap={2}>
                <label htmlFor="viewport">ビューポート(Shift+Tab):</label>
                <SelectBox $w="100%">
                  <select id="viewport"><option>---</option></select>
                  <Chevron />
                </SelectBox>
              </Field>
              <FilterPanel>
                <PanelTitle>フィルター選択</PanelTitle>
                <Filters>
                  {FILTERS.map((name, i) => (
                    <FilterItem key={name}>
                      <input type="checkbox" defaultChecked={i !== 1} />
                      {name}
                    </FilterItem>
                  ))}
                </Filters>
              </FilterPanel>
            </Side>
          </Body>

          <Messages>
            {MESSAGES.map(([name, value, w]) => (
              <Message key={name} $w={w}>
                <dt>{name}</dt>
                <dd>{value}</dd>
              </Message>
            ))}
          </Messages>

          <StatusBar>
            <StatusCell $w={10}>フ</StatusCell>
            <StatusCell $w={78}>Z 1.36</StatusCell>
            <StatusCell $w={160}>X 199.3900  Y 71.1200</StatusCell>
            <StatusCell $w={251}>dx 199.3900  dy 71.1200  dist 211.6942</StatusCell>
            <StatusCell $w={184}>グリッド 1.2700</StatusCell>
            <StatusCell $w={55}>mm</StatusCell>
            <StatusCell $grow>アイテムを選択</StatusCell>
            <Grip>
              <svg width="9" height="9" fill="#b5b5b5"><path d="M6 0h2v2H6zM3 3h2v2H3zM6 3h2v2H6zM0 6h2v2H0zM3 6h2v2H3zM6 6h2v2H6z" /></svg>
            </Grip>
          </StatusBar>
        </Window>

        <RightSliver />
        <BottomSliver />
      </Desktop>
    </>
  );
}
